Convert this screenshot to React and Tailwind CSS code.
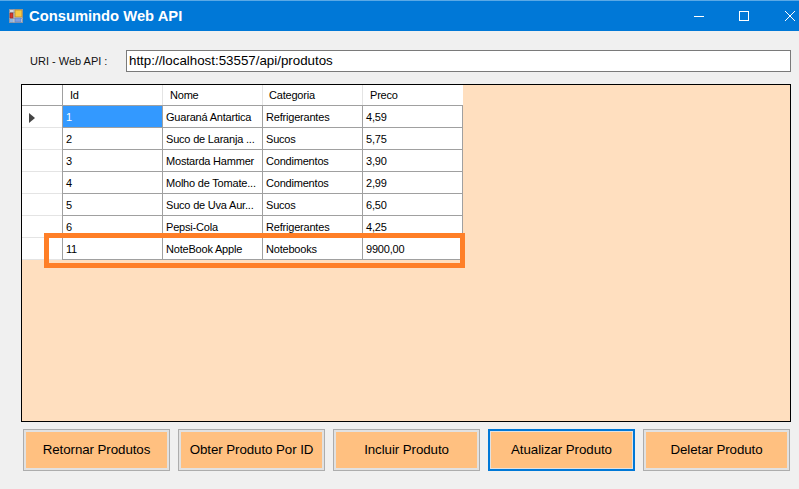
import React from "react";

const produtos = [
  ["1", "Guaraná Antartica", "Refrigerantes", "4,59"],
  ["2", "Suco de Laranja ...", "Sucos", "5,75"],
  ["3", "Mostarda Hammer", "Condimentos", "3,90"],
  ["4", "Molho de Tomate...", "Condimentos", "2,99"],
  ["5", "Suco de Uva Aur...", "Sucos", "6,50"],
  ["6", "Pepsi-Cola", "Refrigerantes", "4,25"],
  ["11", "NoteBook Apple", "Notebooks", "9900,00"],
];

const botoes = ["Retornar Produtos", "Obter Produto Por ID", "Incluir Produto", "Atualizar Produto", "Deletar Produto"];

function AppIcon() {
  return (
    <svg width="14" height="14" viewBox="0 0 14 14" className="shrink-0">
      <rect x="0.5" y="0.5" width="13" height="13" fill="#d4d8de" stroke="#8b97a8" />
      <path d="M0 3.5 H6 M5 0 V14 M0 9.5 H14" stroke="#9aa5b4" />
      <rect x="6" y="1" width="7" height="7" fill="#f6c945" stroke="#b98a2c" strokeWidth="0.8" />
      <rect x="1" y="4" width="3" height="5" fill="#d8382c" stroke="#8a2a20" strokeWidth="0.6" />
      <rect x="1" y="10" width="3" height="3" fill="#8fb4e0" />
      <rect x="6" y="9" width="6" height="4" fill="#7f9fe0" stroke="#5f7fc0" strokeWidth="0.6" />
    </svg>
  );
}

function Linha({ p, index }) {
  return (
    <div className="flex h-[22px] text-[11px] leading-[23px] tracking-[-0.2px] text-black">
      <div className="w-[40px] border-b border-[#e4e4e4] relative">
        {index === 0 && (
          <svg width="6" height="10" viewBox="0 0 6 10" className="absolute left-[7px] top-[7px]">
            <path d="M0 0 L6 5 L0 10 Z" fill="#444" />
          </svg>
        )}
      </div>
      <div className={`w-[100px] border-l border-b border-[#a0a0a0] pl-[3px] ${index === 0 ? "bg-[#3399ff] text-white" : ""}`}>{p[0]}</div>
      <div className="w-[100px] border-l border-b border-[#a0a0a0] pl-[3px] whitespace-nowrap">{p[1]}</div>
      <div className="w-[100px] border-l border-b border-[#a0a0a0] pl-[3px]">{p[2]}</div>
      <div className="w-[101px] border-l border-r border-b border-[#a0a0a0] pl-[3px]">{p[3]}</div>
    </div>
  );
}

export default function App() {
  return (
    <div className="w-[799px] h-[489px] bg-[#f0f0f0] flex flex-col overflow-hidden font-['Liberation_Sans',Arial,sans-serif]">
      <div className="h-[31px] shrink-0 bg-[#0078d7] border-t border-[#5aa9e6] flex items-center pl-[9px] text-white">
        <AppIcon />
        <span className="ml-[6px] text-[14.75px] font-bold">Consumindo Web API</span>
        <div className="ml-auto flex items-center h-full">
          <svg width="10" height="10" viewBox="0 0 10 10" className="mr-[35px]">
            <path d="M0 5.5 H10" stroke="#fff" />
          </svg>
          <svg width="10" height="10" viewBox="0 0 10 10" className="mr-[36px]">
            <rect x="0.5" y="0.5" width="9" height="9" fill="none" stroke="#fff" />
          </svg>
          <svg width="10" height="10" viewBox="0 0 10 10" className="mr-[4px]">
            <path d="M0 0 L10 10 M10 0 L0 10" stroke="#fff" />
          </svg>
        </div>
      </div>

      <div className="flex items-center pt-[19px] pl-[30px]">
        <span className="w-[96px] text-[11px] text-[#111]">URI - Web API :</span>
        <div className="w-[665px] h-[22px] bg-white border border-[#7a7a7a] pl-[2px] text-[13.33px] leading-[20px] text-black">
          http://localhost:53557/api/produtos
        </div>
      </div>

      <div className="relative ml-[21px] mt-[12px] w-[770px] h-[338px] bg-[#ffdfbf] border border-black">
        <div className="w-[441px] bg-white">
          <div className="flex h-[21px] text-[11px] leading-[21px] tracking-[-0.2px] text-black border-b border-[#a0a0a0]">
            <div className="w-[40px]" />
            <div className="w-[100px] border-l border-[#a0a0a0] pl-[7px]">Id</div>
            <div className="w-[100px] border-l border-[#e4e4e4] pl-[7px]">Nome</div>
            <div className="w-[100px] border-l border-[#e4e4e4] pl-[6px]">Categoria</div>
            <div className="w-[101px] border-l border-[#e4e4e4] pl-[7px]">Preco</div>
          </div>
          {produtos.map((p, i) => (
            <Linha key={p[0]} p={p} index={i} />
          ))}
        </div>
        <div className="absolute left-[22px] top-[148px] w-[421px] h-[35px] border-[5px] border-[#ff7f27]" />
      </div>

      <div className="flex gap-[8px] pl-[23px] pt-[7px]">
        {botoes.map((b, i) => (
          <button
            key={b}
            className={`w-[147px] h-[42px] bg-[#ffc080] text-[13.33px] tracking-[-0.08px] text-black ${
              i === 3 ? "border-2 border-[#0078d7] outline outline-1 -outline-offset-3 outline-[#e1e1e1]" : "border border-[#adadad] outline-2 -outline-offset-3 outline-[#e1e1e1]"
            }`}
          >
            {b}
          </button>
        ))}
      </div>
    </div>
  );
}
